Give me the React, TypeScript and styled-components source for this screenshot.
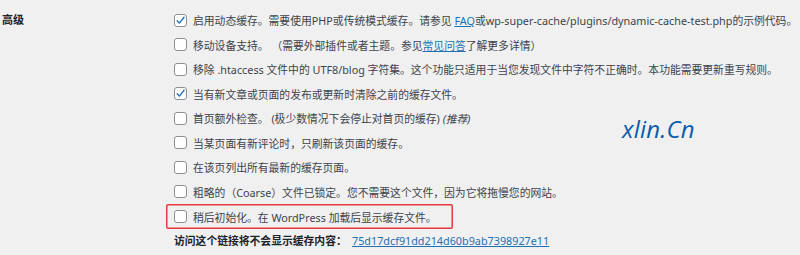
import React, { FC } from 'react';
import styled, { createGlobalStyle } from 'styled-components';

const GlobalStyle = createGlobalStyle`
  html, body {
    margin: 0;
    padding: 0;
    background: #f0f0f1;
  }
  body {
    font-family: "Noto Sans", "Noto Sans CJK SC", sans-serif;
    color: #3c434a;
  }
`;

const Page = styled.div`
  position: relative;
  width: 800px;
  height: 255px;
  overflow: hidden;
  background: #f0f0f1;
`;

const Table = styled.div`
  display: grid;
  grid-template-columns: 174px 1fr;
  padding-top: 8px;
`;

const Heading = styled.div`
  padding-left: 2px;
  font-size: 11px;
  font-weight: 700;
  line-height: 24.5px;
  color: #1d2327;
`;

const Options = styled.div`
  display: flex;
  flex-direction: column;
  align-items: flex-start;
`;

const Row = styled.label<{ $marked?: boolean }>`
  display: flex;
  align-items: center;
  gap: 6px;
  height: 24.5px;
  font-size: 10.8px;
  white-space: nowrap;
  box-sizing: border-box;
  ${p => p.$marked && `
    margin-left: -8px;
    padding: 0 16px 0 8px;
    height: 25px;
    border-radius: 2px;
    box-shadow: inset 0 0 0 1.5px #e4393c;
  `}
`;

const Box = styled.span<{ $checked?: boolean }>`
  display: inline-flex;
  align-items: center;
  justify-content: center;
  flex: none;
  width: 13px;
  height: 13px;
  box-sizing: border-box;
  background: #fff;
  border: 1px solid #8c8f94;
  border-radius: 3px;
  svg {
    display: ${p => (p.$checked ? 'block' : 'none')};
  }
`;

const A = styled.a`
  color: #2271b1;
  text-decoration: underline;
`;

const Em = styled.em`
  font-style: italic;
`;

const Footer = styled.div`
  display: flex;
  align-items: center;
  height: 22px;
  font-size: 10.8px;
  white-space: nowrap;
`;

const FooterLabel = styled.span`
  font-weight: 700;
  color: #1d2327;
  width: 178px;
`;

const Watermark = styled.div`
  position: absolute;
  left: 622px;
  top: 112px;
  font-family: "Open Sans", "Noto Sans", sans-serif;
  font-size: 24px;
  font-style: italic;
  font-weight: 500;
  color: #0b5cad;
  letter-spacing: 0.2px;
`;

const Check: FC<{ checked?: boolean }> = ({ checked }) => (
  <Box $checked={checked}>
    <svg width="11" height="11" viewBox="0 0 20 20">
      <path d="M4 10.5l4 4.2L16.5 4" fill="none" stroke="#2271b1" strokeWidth="2.6" strokeLinecap="round" strokeLinejoin="round" />
    </svg>
  </Box>
);

const App: FC = () => (
  <Page>
    <GlobalStyle />
    <Table>
      <Heading>高级</Heading>
      <Options>
        <Row>
          <Check checked />
          <span>启用动态缓存。需要使用PHP或传统模式缓存。请参见 <A href="#">FAQ</A>或wp-super-cache/plugins/dynamic-cache-test.php的示例代码。</span>
        </Row>
        <Row>
          <Check />
          <span>移动设备支持。 （需要外部插件或者主题。参见<A href="#">常见问答</A>了解更多详情）</span>
        </Row>
        <Row>
          <Check />
          <span>移除 .htaccess 文件中的 UTF8/blog 字符集。这个功能只适用于当您发现文件中字符不正确时。本功能需要更新重写规则。</span>
        </Row>
        <Row>
          <Check checked />
          <span>当有新文章或页面的发布或更新时清除之前的缓存文件。</span>
        </Row>
        <Row>
          <Check />
          <span>首页额外检查。 (极少数情况下会停止对首页的缓存) <Em>(推荐)</Em></span>
        </Row>
        <Row>
          <Check />
          <span>当某页面有新评论时，只刷新该页面的缓存。</span>
        </Row>
        <Row>
          <Check />
          <span>在该页列出所有最新的缓存页面。</span>
        </Row>
        <Row>
          <Check />
          <span>粗略的（Coarse）文件已锁定。您不需要这个文件，因为它将拖慢您的网站。</span>
        </Row>
        <Row $marked>
          <Check />
          <span>稍后初始化。在 WordPress 加载后显示缓存文件。</span>
        </Row>
        <Footer>
          <FooterLabel>访问这个链接将不会显示缓存内容：</FooterLabel>
          <A href="#">75d17dcf91dd214d60b9ab7398927e11</A>
        </Footer>
      </Options>
    </Table>
    <Watermark>xlin.Cn</Watermark>
  </Page>
);

export default App;
